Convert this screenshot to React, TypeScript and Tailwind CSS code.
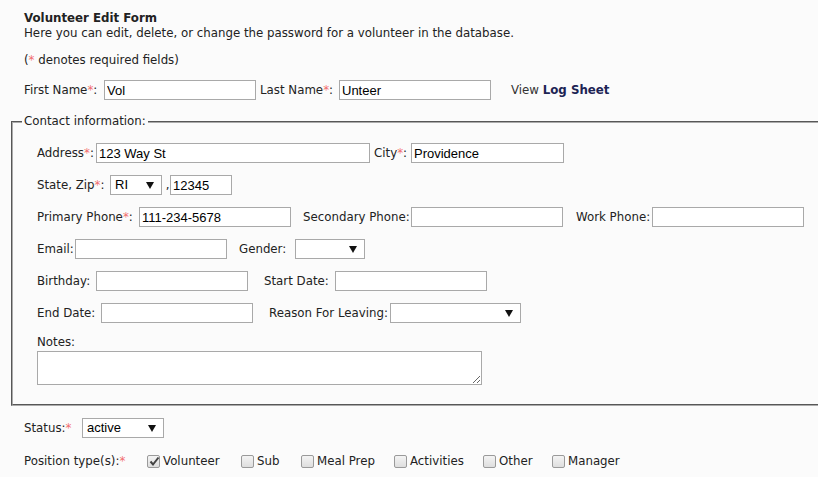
import type { ReactNode } from 'react';

const Req = () => <span className="text-[#f26d6d]">*</span>;

function Label({ w, ml = 0, children }: { w: number; ml?: number; children: ReactNode }) {
  return (
    <span className="inline-block shrink-0 whitespace-nowrap pt-[2px]" style={{ width: w, marginLeft: ml }}>
      {children}
    </span>
  );
}

function TextBox({ w = 152, value = '' }: { w?: number; value?: string }) {
  return (
    <input
      readOnly
      value={value}
      className="h-[20px] shrink-0 border border-[#a9a9a9] bg-white px-[2px] text-[13px] text-black outline-none font-['Liberation_Sans',Arial,sans-serif]"
      style={{ width: w }}
    />
  );
}

function Select({ w, value = '' }: { w: number; value?: string }) {
  return (
    <div
      className="flex h-[20px] shrink-0 items-center justify-between border border-[#a9a9a9] bg-white pl-[4px] pr-[7px] text-[13px] text-black font-['Liberation_Sans',Arial,sans-serif]"
      style={{ width: w }}
    >
      <span>{value}</span>
      <svg width="8" height="7" viewBox="0 0 8 7">
        <path d="M0 0 H8 L4 7 Z" fill="#111" />
      </svg>
    </div>
  );
}

function Check({ label, checked = false, w }: { label: string; checked?: boolean; w?: number }) {
  return (
    <span className="flex shrink-0 items-center" style={{ width: w }}>
      <span className="relative mr-[3px] h-[13px] w-[13px] rounded-[2px] border border-[#9a9a9a] bg-gradient-to-b from-[#f4f4f4] to-[#dedede]">
        {checked && (
          <svg className="absolute left-[1px] top-[0px]" width="11" height="11" viewBox="0 0 11 11">
            <path d="M1.5 5.5 L4 8.5 L9.5 1.5" fill="none" stroke="#444" strokeWidth="2" />
          </svg>
        )}
      </span>
      <span className="pt-[2px]">{label}</span>
    </span>
  );
}

const Row = ({ children, className = '' }: { children: ReactNode; className?: string }) => (
  <div className={`flex h-[20px] items-center ${className}`}>{children}</div>
);

export default function App() {
  return (
    <div className="h-[477px] w-[818px] overflow-hidden bg-[#fbfbfb] text-[11.8px] text-[#222] font-['DejaVu_Sans',Verdana,sans-serif]">
      <div className="pl-[24px] pt-[11px]">
        <h1 className="font-bold leading-[15px]">Volunteer Edit Form</h1>
        <p className="leading-[15px]">
          Here you can edit, delete, or change the password for a volunteer in the database.
        </p>
        <p className="mt-[12px] leading-[15px]">
          (<Req /> denotes required fields)
        </p>
        <Row className="mt-[12px]">
          <Label w={80}>
            First Name<Req />:
          </Label>
          <TextBox value="Vol" />
          <Label w={79} ml={4}>
            Last Name<Req />:
          </Label>
          <TextBox value="Unteer" />
          <span className="ml-[20px] whitespace-nowrap pt-[2px] text-[#333]">
            View <b className="text-[#1c2454]">Log Sheet</b>
          </span>
        </Row>
      </div>

      <fieldset className="ml-[11px] mt-[14px] w-[812px] border-2 border-[#ababab] px-[9px] pb-[19px] [border-style:groove]">
        <legend className="px-[2px] leading-[15px]">Contact information:</legend>
        <div className="flex flex-col gap-[12px] pl-[15px] pt-[14px]">
          <Row>
            <Label w={59}>
              Address<Req />:
            </Label>
            <TextBox w={274} value="123 Way St" />
            <Label w={37} ml={4}>
              City<Req />:
            </Label>
            <TextBox w={153} value="Providence" />
          </Row>
          <Row>
            <Label w={73}>
              State, Zip<Req />:
            </Label>
            <Select w={52} value="RI" />
            <Label w={8}>&nbsp;,</Label>
            <TextBox w={62} value="12345" />
          </Row>
          <Row>
            <Label w={102}>
              Primary Phone<Req />:
            </Label>
            <TextBox value="111-234-5678" />
            <Label w={108} ml={12}>
              Secondary Phone:
            </Label>
            <TextBox />
            <Label w={76} ml={13}>
              Work Phone:
            </Label>
            <TextBox />
          </Row>
          <Row>
            <Label w={38}>Email:</Label>
            <TextBox />
            <Label w={56} ml={12}>
              Gender:
            </Label>
            <Select w={70} />
          </Row>
          <Row>
            <Label w={59}>Birthday:</Label>
            <TextBox />
            <Label w={71} ml={16}>
              Start Date:
            </Label>
            <TextBox />
          </Row>
          <Row>
            <Label w={64}>End Date:</Label>
            <TextBox />
            <Label w={121} ml={16}>
              Reason For Leaving:
            </Label>
            <Select w={131} />
          </Row>
          <div>
            <div className="leading-[15px]">Notes:</div>
            <textarea
              readOnly
              className="mt-[1px] block h-[34px] w-[445px] border border-[#a9a9a9] bg-white outline-none"
            />
          </div>
        </div>
      </fieldset>

      <div className="pl-[24px]">
        <Row className="mt-[12px]">
          <Label w={58}>
            Status:<Req />
          </Label>
          <Select w={82} value="active" />
        </Row>
        <Row className="mt-[13px]">
          <Label w={123}>
            Position type(s):<Req />
          </Label>
          <Check label="Volunteer" checked w={94} />
          <Check label="Sub" w={60} />
          <Check label="Meal Prep" w={93} />
          <Check label="Activities" w={89} />
          <Check label="Other" w={69} />
          <Check label="Manager" />
        </Row>
      </div>
    </div>
  );
}
